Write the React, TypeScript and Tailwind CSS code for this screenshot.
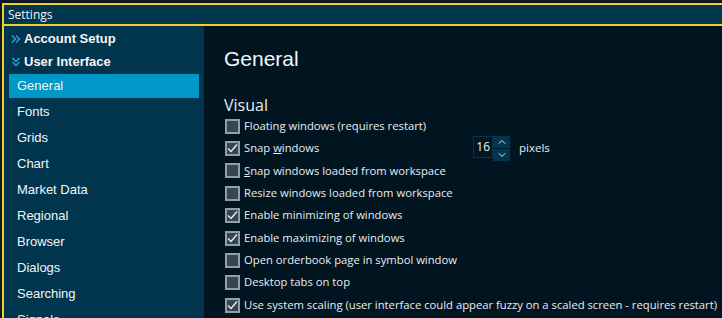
import { ChevronUp, ChevronDown } from "lucide-react";

const navItems = [
  "General",
  "Fonts",
  "Grids",
  "Chart",
  "Market Data",
  "Regional",
  "Browser",
  "Dialogs",
  "Searching",
  "Signals",
];

type Opt = { label: React.ReactNode; checked: boolean; spinner?: boolean };

const options: Opt[] = [
  { label: "Floating windows (requires restart)", checked: false },
  {
    label: (
      <>
        Snap <span className="underline">w</span>indows
      </>
    ),
    checked: true,
    spinner: true,
  },
  {
    label: (
      <>
        <span className="underline">S</span>nap windows loaded from workspace
      </>
    ),
    checked: false,
  },
  { label: "Resize windows loaded from workspace", checked: false },
  { label: "Enable minimizing of windows", checked: true },
  { label: "Enable maximizing of windows", checked: true },
  { label: "Open orderbook page in symbol window", checked: false },
  { label: "Desktop tabs on top", checked: false },
  {
    label:
      "Use system scaling (user interface could appear fuzzy on a scaled screen - requires restart)",
    checked: true,
  },
];

const Checkbox = ({ checked }: { checked: boolean }) => (
  <div className="w-[15px] h-[15px] shrink-0 border-2 border-[#929fa8] bg-[#37454f] flex items-center justify-center">
    {checked && (
      <svg width="11" height="11" viewBox="0 0 11 11">
        <path d="M1 5.5 L4 8.5 L10 1.5" stroke="#e8eef2" strokeWidth="1.4" fill="none" />
      </svg>
    )}
  </div>
);

const Spinner = () => (
  <div className="absolute left-[248px] top-[-1px] flex items-center gap-[9px]">
    <div className="flex h-[22px]">
      <div className="w-[20px] h-full border border-[#03344c] bg-[#001620] flex items-center justify-end pr-[2px] text-[12px] text-[#f0f4f6]">
        16
      </div>
      <div className="w-[17px] h-full flex flex-col gap-[1px] bg-[#001620]">
        <div className="flex-1 bg-[#02364f] flex items-center justify-center">
          <ChevronUp size={12} strokeWidth={2} color="#dfe7ec" />
        </div>
        <div className="flex-1 bg-[#02364f] flex items-center justify-center">
          <ChevronDown size={12} strokeWidth={2} color="#dfe7ec" />
        </div>
      </div>
    </div>
    <span className="text-[11.5px] text-[#e8eef2]">pixels</span>
  </div>
);

export default function App() {
  return (
    <div className="w-[722px] h-[318px] overflow-hidden bg-[#0b1822] pt-[3px] pl-[2px] font-['Open_Sans',sans-serif]">
      <div className="h-full border-t-2 border-l-2 border-[#f3cf2c] flex flex-col">
        {/* title bar */}
        <div className="h-[21px] shrink-0 bg-[#01364f] border-b-2 border-[#f3cf2c] flex items-center pl-[4px] text-[12px] text-[#f2f5f7]">
          Settings
        </div>

        <div className="flex flex-1 min-h-0">
          {/* sidebar */}
          <div className="w-[200px] shrink-0 bg-[#01354d] px-[5px] pt-[1px] font-['Liberation_Sans',sans-serif] text-[#f2f5f7]">
            <div className="h-[23px] flex items-center gap-[3px] pl-[2px] text-[13px] font-bold">
              <svg width="10" height="10" viewBox="0 0 10 10">
                <path d="M1 1.5 L4.5 5 L1 8.5 M5 1.5 L8.5 5 L5 8.5" stroke="#2f9bd4" strokeWidth="1.5" fill="none" />
              </svg>
              Account Setup
            </div>
            <div className="h-[23px] flex items-center gap-[3px] pl-[2px] text-[13px] font-bold">
              <svg width="10" height="10" viewBox="0 0 10 10">
                <path d="M1.5 1 L5 4.5 L8.5 1 M1.5 5 L5 8.5 L8.5 5" stroke="#2f9bd4" strokeWidth="1.5" fill="none" />
              </svg>
              User Interface
            </div>
            {navItems.map((item, i) => (
              <div key={item} className="h-[26px] py-[1px]">
                <div
                  className={`h-full flex items-center pl-[8px] text-[13px] ${
                    i === 0 ? "bg-[#0098c6]" : ""
                  }`}
                >
                  {item}
                </div>
              </div>
            ))}
          </div>

          {/* main */}
          <div className="flex-1 bg-[#001520] pl-[20px] pt-[18px] text-[#e8eef2]">
            <div className="h-[30px] flex items-center text-[21px] font-['Liberation_Sans',sans-serif] text-[#f4f7f9]">
              General
            </div>
            <div className="mt-[20px] h-[21px] flex items-center text-[16px]">Visual</div>
            <div className="flex flex-col pl-[1px]">
              {options.map((o, i) => (
                <div key={i} className="relative h-[22.4px] flex items-center gap-[4px] text-[11.25px] whitespace-nowrap">
                  <Checkbox checked={o.checked} />
                  <span>{o.label}</span>
                  {o.spinner && <Spinner />}
                </div>
              ))}
            </div>
          </div>
        </div>
      </div>
    </div>
  );
}
